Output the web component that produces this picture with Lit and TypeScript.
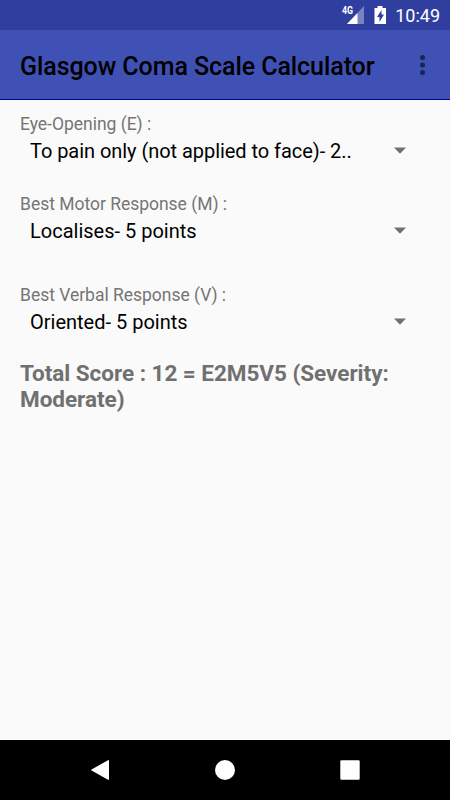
import { LitElement, html, css } from "lit";
import { customElement } from "lit/decorators.js";

const fields = [
  { id: "eye", label: "Eye-Opening (E) :", value: "To pain only (not applied to face)- 2.." },
  { id: "motor", label: "Best Motor Response (M) :", value: "Localises- 5 points" },
  { id: "verbal", label: "Best Verbal Response (V) :", value: "Oriented- 5 points" },
];

@customElement("app-root")
export class AppRoot extends LitElement {
  static styles = css`
    :host { display: flex; flex-direction: column; width: 450px; height: 800px; background: #fafafa; font-family: Roboto, sans-serif; overflow: hidden; }
    svg { display: block; flex: none; }
    .status { height: 30px; box-sizing: border-box; background: #303f9f; color: #fff; display: flex; align-items: center; justify-content: flex-end; padding-right: 10px; font-size: 18px; line-height: 22px; letter-spacing: -0.02px; white-space: nowrap; }
    .status svg { margin-right: 9px; }
    .time { padding-top: 2px; }
    .bar { height: 70px; box-sizing: border-box; background: #3f51b5; border-bottom: 1px solid #00008f; display: flex; align-items: center; justify-content: space-between; padding: 2px 24px 0 20px; }
    .title { padding-top: 2px; font-size: 25px; font-weight: 500; line-height: 30px; letter-spacing: -0.07px; color: #000; white-space: nowrap; }
    main { flex: 1; padding: 13px 20px 0; }
    .label { font-size: 17.5px; line-height: 22px; letter-spacing: -0.02px; color: #757575; white-space: nowrap; }
    .select { display: flex; align-items: center; justify-content: space-between; height: 31px; padding: 0 23px 0 10px; font-size: 20px; color: #000; white-space: nowrap; }
    .eye { height: 80px; }
    .eye .select { letter-spacing: -0.05px; }
    .motor { height: 91px; }
    .verbal { height: 76px; }
    .total { font-size: 22.5px; line-height: 26px; font-weight: 700; letter-spacing: -0.03px; color: #707070; white-space: nowrap; }
    nav { height: 60px; background: #000; display: flex; justify-content: center; align-items: center; gap: 101px; }
  `;
  render() {
    return html`
      <div class="status">
        <svg width="46" height="30" viewBox="0 0 46 30"><text x="2" y="14" fill="#fff" font-size="10.500" font-weight="700" textLength="11" lengthAdjust="spacingAndGlyphs">4G</text><path d="M24 6V24H7Z" fill="#7983c1"/><path d="M17.500 13V24H7Z" fill="#fff"/><path fill-rule="evenodd" d="M34.500 8h3V6h5v2h3.500v16H34.500ZM41.500 10l-4.500 7h2.500v5l4.500-7.500h-2.500Z" fill="#fff"/></svg>
        <span class="time">10:49</span>
      </div>
      <header class="bar">
        <span class="title">Glasgow Coma Scale Calculator</span>
        <svg width="7" height="22" viewBox="0 0 7 22" fill="#1c2451"><circle cx="3.500" cy="2.500" r="2.500"/><circle cx="3.500" cy="10" r="2.500"/><circle cx="3.500" cy="17.500" r="2.500"/></svg>
      </header>
      <main>
        ${fields.map((f) => html`<div class=${f.id}>
          <div class="label">${f.label}</div>
          <div class="select"><span>${f.value}</span><svg width="14" height="7" viewBox="0 0 14 7"><path d="M1 .5H13L7 6.700Z" fill="#707070"/></svg></div>
        </div>`)}
        <div class="total">Total Score : 12 = E2M5V5 (Severity:<br>Moderate)</div>
      </main>
      <nav>
        <svg width="24" height="24" viewBox="0 0 24 24" fill="#fff"><path d="M20 2.200Q21 1.700 21 3V21Q21 22.300 20 21.800L3.600 12.600Q2.600 12 3.600 11.400Z"/></svg>
        <svg width="24" height="24" viewBox="0 0 24 24" fill="#fff"><circle cx="12" cy="12" r="10"/></svg>
        <svg width="24" height="24" viewBox="0 0 24 24" fill="#fff"><rect x="2.300" y="2.300" width="19.400" height="19.400" rx="1.200"/></svg>
      </nav>`;
  }
}
